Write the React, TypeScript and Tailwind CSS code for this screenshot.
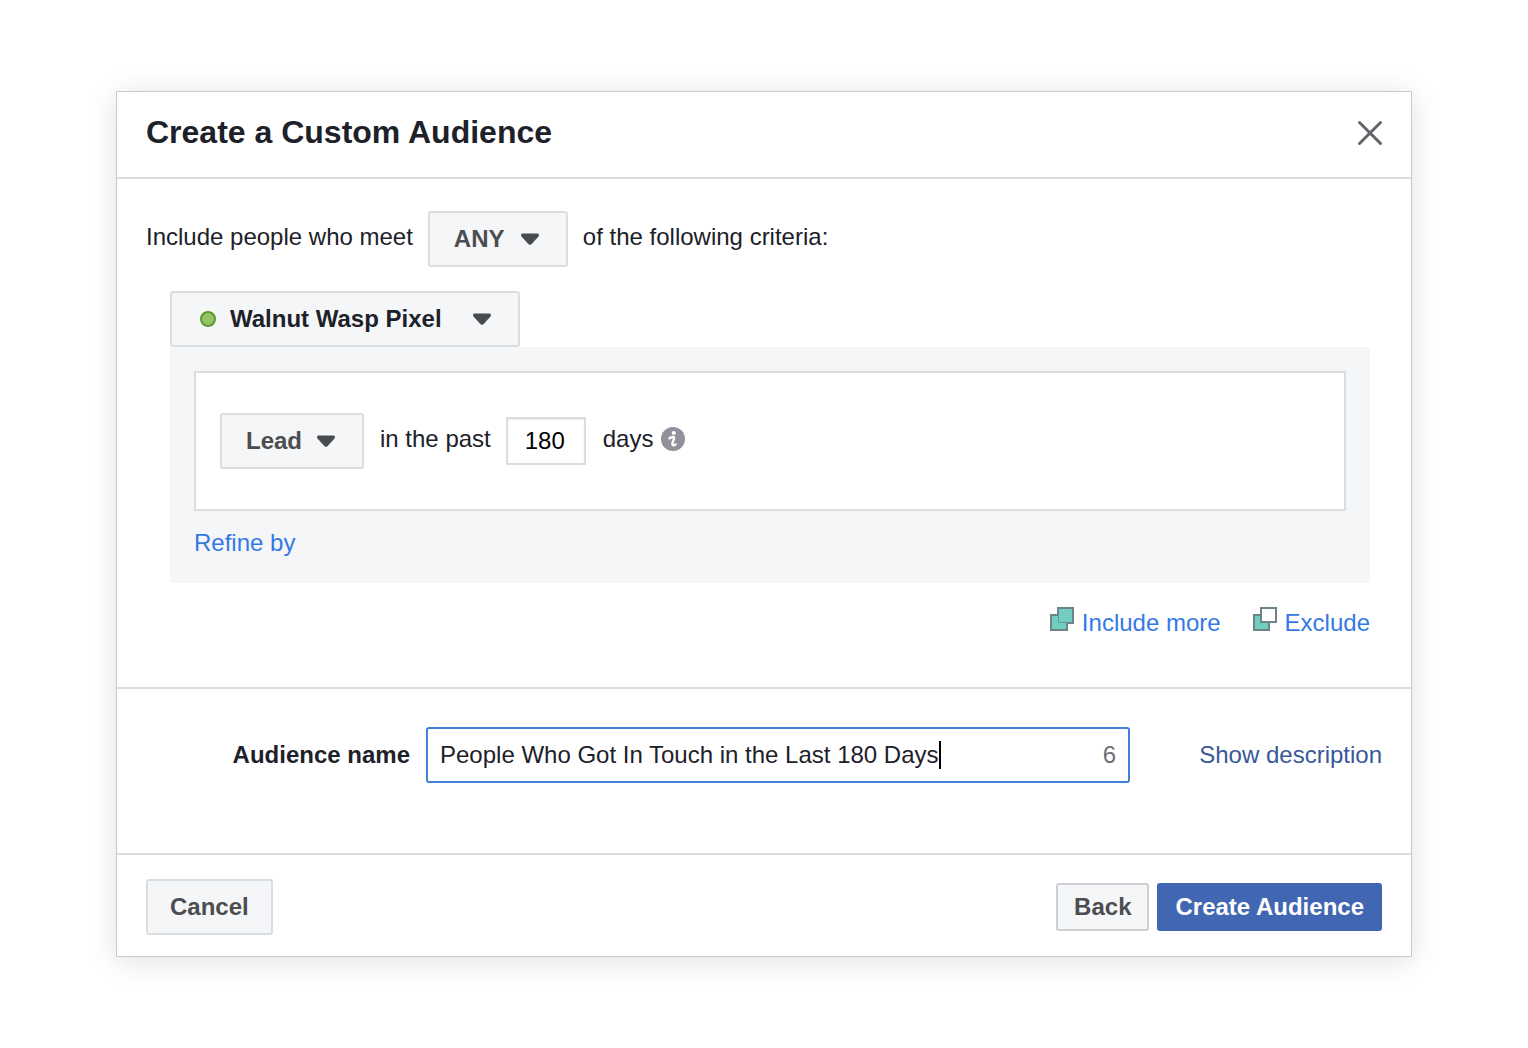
import React, { useState } from 'react';
import clsx from 'clsx';

function Caret() {
  return (
    <svg viewBox="0 0 18 12" className="h-3 w-[18px] fill-[#484b4f]" aria-hidden="true">
      <path d="M1.500 0.500h15c1.500 0 1.900 1.900 1 2.900L10.900 10.800a2.500 2.500 0 0 1-3.800 0L0.500 3.400C-0.400 2.400 0 0.500 1.500 0.500Z" />
    </svg>
  );
}

type DropdownProps = {
  label: string;
  options: string[];
  className: string;
  children?: React.ReactNode;
};

function Dropdown({ label, options, className, children }: DropdownProps) {
  return (
    <div className="relative shrink-0">
      <select
        aria-label={label}
        className={clsx(
          'block h-14 appearance-none rounded-[3px] border-2 border-[#dadddf] bg-[#f5f6f7] font-bold outline-none',
          className
        )}
      >
        {options.map((option) => (
          <option key={option}>{option}</option>
        ))}
      </select>
      {children}
      <span className="pointer-events-none absolute inset-y-0 right-[29px] flex items-center">
        <Caret />
      </span>
    </div>
  );
}

function InfoIcon() {
  return (
    <svg viewBox="0 0 24 24" className="size-6" aria-hidden="true">
      <circle cx="12" cy="12" r="12" fill="#90919b" />
      <circle cx="12.800" cy="6" r="2.100" fill="#fff" />
      <path
        d="M8.500 11.300c1.500-1.100 3.900-1.700 4.500-1.100.600.600-.300 2.300-.900 4-.7 2-1 3.700-.200 4 .9.300 2-.2 2.700-.8"
        fill="none"
        stroke="#fff"
        strokeWidth="2.400"
        strokeLinecap="round"
        strokeLinejoin="round"
      />
    </svg>
  );
}

function IncludeIcon() {
  return (
    <svg viewBox="0 0 24 24" className="size-6" aria-hidden="true">
      <path d="M1 8h7V1h15v15h-6v7H1Z" fill="#70cdbf" stroke="#6f8489" strokeWidth="2" />
      <path d="M8.500 8v7.500H16" fill="none" stroke="#5b9f9a" />
    </svg>
  );
}

function ExcludeIcon() {
  return (
    <svg viewBox="0 0 24 24" className="size-6" aria-hidden="true">
      <path d="M1 8h15v15H1Z" fill="#70cdbf" stroke="#6f8489" strokeWidth="2" />
      <path d="M8 1h15v14H8Z" fill="#fff" stroke="#6f8489" strokeWidth="2" />
    </svg>
  );
}

export default function App() {
  const [days, setDays] = useState('180');
  const [name, setName] = useState('People Who Got In Touch in the Last 180 Days');

  return (
    <main className="min-h-screen bg-white px-[116px] pt-[91px] pb-[91px] font-['Liberation_Sans',Arial,sans-serif] text-2xl leading-7 text-[#1d2129]">
      <section
        role="dialog"
        aria-labelledby="dialog-title"
        className="border border-[#c8c9cb] bg-white shadow-[0_4px_28px_rgba(0,0,0,0.12)]"
      >
        <header className="flex items-start justify-between border-b-2 border-[#dadddf] pt-5 pr-7 pb-[25px] pl-[29px]">
          <h1 id="dialog-title" className="text-[32px] leading-10 font-bold">
            Create a Custom Audience
          </h1>
          <button type="button" aria-label="Close" className="mt-2">
            <svg viewBox="0 0 26 26" className="size-[26px]" fill="none" stroke="#606468" strokeWidth="3" strokeLinecap="round">
              <path d="M2.500 2.500l21 21M23.500 2.500l-21 21" />
            </svg>
          </button>
        </header>

        <div className="border-b-2 border-[#dadddf] pt-8 pr-[41px] pb-[50px] pl-[29px]">
          <div className="flex items-center gap-[15px]">
            <span className="pb-1">Include people who meet</span>
            <Dropdown label="Match type" options={['ANY', 'ALL']} className="w-[140px] pl-6 text-[#4b4d50]" />
            <span className="pb-1">of the following criteria:</span>
          </div>

          <div className="mt-6 ml-6">
            <div className="flex">
              <Dropdown label="Pixel" options={['Walnut Wasp Pixel']} className="w-[350px] pl-[58px] text-[#1d2129]">
                <span className="pointer-events-none absolute inset-y-0 left-[30px] flex items-center">
                  <span className="size-4 rounded-full border-2 border-[#5b9a2f] bg-[#94c466]" />
                </span>
              </Dropdown>
            </div>

            <div className="rounded-b-[3px] bg-[#f5f6f7] p-6">
              <div className="flex items-center border-2 border-[#dadddf] bg-white px-6 py-10">
                <Dropdown
                  label="Event"
                  options={['Lead', 'Purchase', 'ViewContent']}
                  className="w-[144px] pl-6 text-[#4b4d50]"
                />
                <label htmlFor="days" className="ml-4 pb-1">
                  in the past
                </label>
                <input
                  id="days"
                  value={days}
                  onChange={(e) => setDays(e.target.value)}
                  className="ml-[15px] h-12 w-20 border-2 border-[#dadddf] bg-white pr-0.5 text-center text-black shadow-[inset_0_1px_2px_rgba(0,0,0,0.08)] outline-none"
                />
                <span className="ml-[17px] pb-1">days</span>
                <span className="ml-2 pb-1">
                  <InfoIcon />
                </span>
              </div>
              <a href="#refine" className="mt-[18px] mb-0.5 block w-fit text-[#3578e5]">
                Refine by
              </a>
            </div>

            <div className="mt-6 flex justify-end gap-8">
              <a href="#include" className="flex gap-2 text-[#3578e5]">
                <IncludeIcon />
                <span className="pt-0.5">Include more</span>
              </a>
              <a href="#exclude" className="flex gap-2 text-[#3578e5]">
                <ExcludeIcon />
                <span className="pt-0.5">Exclude</span>
              </a>
            </div>
          </div>
        </div>

        <div className="flex items-center border-b-2 border-[#dadddf] pt-[38px] pr-[29px] pb-[70px] pl-[29px]">
          <label htmlFor="audience-name" className="w-[264px] shrink-0 text-right font-bold">
            Audience name
          </label>
          <div className="ml-4 flex h-14 w-[704px] items-center rounded-[3px] border-2 border-[#4080d6] bg-white px-3">
            <input
              id="audience-name"
              value={name}
              onChange={(e) => setName(e.target.value)}
              className="field-sizing-content caret-transparent outline-none"
            />
            <span className="h-7 w-0.5 bg-black" />
            <span className="ml-auto text-[#6c6f73]">6</span>
          </div>
          <a href="#description" className="ml-auto text-[#385898]">
            Show description
          </a>
        </div>

        <footer className="flex items-center gap-2 px-[29px] pt-6 pb-[21px] font-bold">
          <button type="button" className="mr-auto h-14 rounded-[3px] border-2 border-[#dadddf] bg-[#f5f6f7] px-[22px] text-[#4b4d50]">
            Cancel
          </button>
          <button type="button" className="h-12 rounded-[3px] border-2 border-[#ccd0d5] bg-[#f5f6f7] px-4 text-[#4b4d50]">
            Back
          </button>
          <button type="button" className="h-12 rounded-[3px] bg-[#4267b2] px-[18px] text-white">
            Create Audience
          </button>
        </footer>
      </section>
    </main>
  );
}
